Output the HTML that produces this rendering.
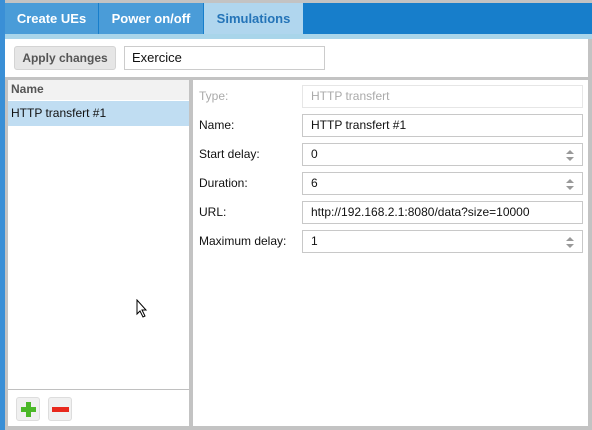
<!DOCTYPE html><html><head><style>
*{box-sizing:border-box;margin:0;padding:0}
body{width:592px;height:430px;position:relative;overflow:hidden;background:#c3c3c3;font-family:"Liberation Sans",sans-serif;font-size:12px;color:#111}
div{position:absolute}
.tab{top:3px;height:31px;color:#fff;font-weight:bold;font-size:13px;line-height:31px;text-align:center}
.in{left:302px;width:281px;height:23px;border:1px solid #c8c8c8;background:#fff;padding-left:8px;line-height:21px;font-size:12px}
.lb{left:199px;font-size:12px;line-height:23px}
.sp{right:12px;top:6px;width:0;height:0}
.sp:before{content:"";position:absolute;left:-4px;top:0;border:4px solid transparent;border-top:0;border-bottom:4px solid #999}
.sp:after{content:"";position:absolute;left:-4px;top:7px;border:4px solid transparent;border-bottom:0;border-top:4px solid #999}
</style></head><body>
<div style="left:0;top:0;width:5px;height:430px;background:#3a8fd6"></div>
<div style="left:5px;top:3px;width:587px;height:31px;background:#177ecb"></div>
<div class="tab" style="left:5px;width:93px;background:#4a9cd8">Create UEs</div>
<div class="tab" style="left:99px;width:104px;background:#4a9cd8">Power on/off</div>
<div class="tab" style="left:204px;width:99px;background:#b0d6ee;color:#2474b8">Simulations</div>
<div style="left:5px;top:34px;width:587px;height:5px;background:#a9d5ea"></div>
<div style="left:5px;top:39px;width:583px;height:38px;background:#fff"></div>
<div style="left:14px;top:46px;width:102px;height:24px;background:#e6e6e6;border:1px solid #d4d4d4;border-radius:3px;color:#555;font-weight:bold;text-align:center;line-height:22px">Apply changes</div>
<div style="left:124px;top:46px;width:201px;height:24px;background:#fff;border:1px solid #ccc;padding-left:7px;line-height:22px;font-size:13px">Exercice</div>
<div style="left:8px;top:80px;width:181px;height:346px;background:#fff"></div>
<div style="left:8px;top:80px;width:181px;height:20px;background:#f2f2f2;color:#555;font-weight:bold;padding-left:3px;line-height:19px;font-size:12px">Name</div>
<div style="left:8px;top:101px;width:181px;height:25px;background:#c0ddf2;padding-left:3px;line-height:25px;font-size:12px">HTTP transfert #1</div>
<div style="left:8px;top:389px;width:181px;height:1px;background:#c0c0c0"></div>
<div style="left:16px;top:397px;width:24px;height:24px;background:#f0f0f0;border:1px solid #ddd;border-radius:3px"><div style="left:9px;top:4px;width:5px;height:15px;background:#4bb828"></div><div style="left:4px;top:9px;width:15px;height:5px;background:#4bb828"></div></div>
<div style="left:48px;top:397px;width:24px;height:24px;background:#f0f0f0;border:1px solid #ddd;border-radius:3px"><div style="left:3px;top:9px;width:17px;height:5px;background:#e8281c"></div></div>
<div style="left:193px;top:80px;width:395px;height:346px;background:#fff"></div>
<div class="lb" style="top:85px;color:#aaa">Type:</div><div class="in" style="top:85px;color:#aaa;border-color:#e6e6e6">HTTP transfert</div>
<div class="lb" style="top:114px">Name:</div><div class="in" style="top:114px">HTTP transfert #1</div>
<div class="lb" style="top:143px">Start delay:</div><div class="in" style="top:143px">0<div class="sp"></div></div>
<div class="lb" style="top:172px">Duration:</div><div class="in" style="top:172px">6<div class="sp"></div></div>
<div class="lb" style="top:201px">URL:</div><div class="in" style="top:201px">http://192.168.2.1:8080/data?size=10000</div>
<div class="lb" style="top:230px">Maximum delay:</div><div class="in" style="top:230px">1<div class="sp"></div></div>
<svg style="position:absolute;left:136px;top:299px" width="12" height="19"><path d="M1 1 L1 15 L4 12 L7 18 L9 17 L6 11 L10 11 Z" fill="#fff" stroke="#000" stroke-width="1"/></svg>
</body></html>
